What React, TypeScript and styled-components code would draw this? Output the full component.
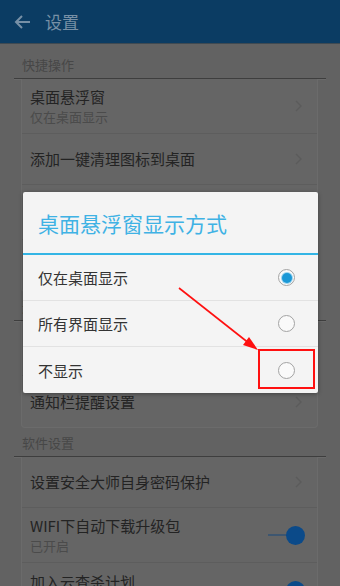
import React from 'react';
import styled, { createGlobalStyle } from 'styled-components';

const GlobalStyle = createGlobalStyle`
  html, body {
    margin: 0;
    padding: 0;
    background: #626262;
  }
  body {
    font-family: "Noto Sans CJK SC", "Noto Sans", "Liberation Sans", sans-serif;
  }
`;

const Screen = styled.div`
  position: relative;
  width: 340px;
  height: 586px;
  overflow: hidden;
  background: #626262;
`;

const Header = styled.div`
  height: 43px;
  background: #0b3c63;
  display: flex;
  align-items: center;
  padding-left: 14px;
  gap: 14px;
  box-shadow: 0 1px 0 #3f4a52;
`;

const HeaderTitle = styled.span`
  color: #7790a6;
  font-size: 17px;
  line-height: 1;
`;

const Content = styled.div`
  padding-top: 7px;
`;

const SectionTitle = styled.div`
  height: 28px;
  margin: 0 14px;
  padding-left: 8px;
  display: flex;
  align-items: center;
  font-size: 13px;
  color: #474747;
  border-bottom: 1px solid #3e3e3e;
  box-shadow: 0 1px 0 #6a6a6a;
`;

const Card = styled.div`
  margin: 0 22px 0 21px;
  background: #656565;
  border: 1px solid #6b6b6b;
  border-top: none;
  border-radius: 0 0 4px 4px;
`;

const Item = styled.div<{ $tall?: boolean }>`
  height: ${(p) => (p.$tall ? 55 : 51)}px;
  display: flex;
  align-items: center;
  padding: 0 12px 0 8px;
  border-bottom: 1px solid #5d5d5d;
  box-sizing: border-box;

  &:last-child {
    border-bottom: none;
  }
`;

const ItemText = styled.div`
  flex: 1;
  display: flex;
  flex-direction: column;
  gap: 1px;
`;

const ItemTitle = styled.span`
  font-size: 15px;
  line-height: 20px;
  color: #232323;
`;

const ItemSub = styled.span`
  font-size: 13px;
  line-height: 17px;
  color: #4b4b4b;
`;

const Chevron = () => (
  <svg width="10" height="14" viewBox="0 0 10 14" style={{ marginRight: 2 }}>
    <polyline points="3,2 8,7 3,12" fill="none" stroke="#5b5b5b" strokeWidth="1.4" />
  </svg>
);

const ToggleWrap = styled.div`
  display: flex;
  align-items: center;
  width: 37px;
`;

const ToggleTrack = styled.div`
  width: 20px;
  height: 2px;
  background: #3d5670;
`;

const ToggleThumb = styled.div`
  width: 19px;
  height: 19px;
  border-radius: 50%;
  background: #0b4a89;
  margin-left: -2px;
`;

const Toggle = () => (
  <ToggleWrap>
    <ToggleTrack />
    <ToggleThumb />
  </ToggleWrap>
);

const Dialog = styled.div`
  position: absolute;
  top: 192px;
  left: 23px;
  width: 295px;
  background: #f4f4f4;
  border-radius: 2px;
  box-shadow: 0 1px 4px rgba(0, 0, 0, 0.35);
`;

const DialogTitle = styled.div`
  height: 61px;
  display: flex;
  align-items: center;
  padding-left: 15px;
  font-size: 21px;
  color: #3fb2e4;
  border-bottom: 2px solid #33b5e5;
`;

const Option = styled.div`
  height: 46px;
  display: flex;
  align-items: center;
  justify-content: space-between;
  padding: 0 23px 0 15px;
  box-sizing: border-box;
  border-bottom: 1px solid #e2e2e2;
  font-size: 15px;
  color: #333333;

  &:last-child {
    border-bottom: none;
  }
`;

const Radio = styled.span<{ $checked?: boolean }>`
  width: 17px;
  height: 17px;
  box-sizing: border-box;
  border-radius: 50%;
  border: 1.5px solid #a3a3a3;
  background: #fafafa;
  display: flex;
  align-items: center;
  justify-content: center;

  &::after {
    content: '';
    display: ${(p) => (p.$checked ? 'block' : 'none')};
    width: 10px;
    height: 10px;
    border-radius: 50%;
    background: #1b98d6;
    box-shadow: 0 0 0 1px #9bd3ee;
  }
`;

const Highlight = styled.div`
  position: absolute;
  left: 258px;
  top: 349px;
  width: 57px;
  height: 40px;
  box-sizing: border-box;
  border: 2px solid #ff1010;
`;

const ArrowLayer = styled.svg`
  position: absolute;
  left: 0;
  top: 0;
  pointer-events: none;
`;

const options = [
  { label: '仅在桌面显示', checked: true },
  { label: '所有界面显示', checked: false },
  { label: '不显示', checked: false },
];

export default function App() {
  return (
    <>
      <GlobalStyle />
      <Screen>
        <Header>
          <svg width="17" height="16" viewBox="0 0 17 16">
            <path d="M16 8H2M8 2L2 8l6 6" fill="none" stroke="#7790a6" strokeWidth="2" />
          </svg>
          <HeaderTitle>设置</HeaderTitle>
        </Header>
        <Content>
          <SectionTitle>快捷操作</SectionTitle>
          <Card>
            <Item $tall>
              <ItemText>
                <ItemTitle>桌面悬浮窗</ItemTitle>
                <ItemSub>仅在桌面显示</ItemSub>
              </ItemText>
              <Chevron />
            </Item>
            <Item>
              <ItemText>
                <ItemTitle>添加一键清理图标到桌面</ItemTitle>
              </ItemText>
              <Chevron />
            </Item>
            <Item $tall>
              <ItemText>
                <ItemTitle>流量悬浮窗</ItemTitle>
                <ItemSub>已关闭</ItemSub>
              </ItemText>
              <Chevron />
            </Item>
            <Item>
              <ItemText>
                <ItemTitle>添加流量图标到桌面</ItemTitle>
              </ItemText>
              <Chevron />
            </Item>
          </Card>
          <SectionTitle>通知栏设置</SectionTitle>
          <Card>
            <Item $tall>
              <ItemText>
                <ItemTitle>通知栏常驻</ItemTitle>
                <ItemSub>已开启</ItemSub>
              </ItemText>
              <Toggle />
            </Item>
            <Item>
              <ItemText>
                <ItemTitle>通知栏提醒设置</ItemTitle>
              </ItemText>
              <Chevron />
            </Item>
          </Card>
          <SectionTitle>软件设置</SectionTitle>
          <Card>
            <Item>
              <ItemText>
                <ItemTitle>设置安全大师自身密码保护</ItemTitle>
              </ItemText>
              <Chevron />
            </Item>
            <Item $tall>
              <ItemText>
                <ItemTitle>WIFI下自动下载升级包</ItemTitle>
                <ItemSub>已开启</ItemSub>
              </ItemText>
              <Toggle />
            </Item>
            <Item $tall>
              <ItemText>
                <ItemTitle>加入云查杀计划</ItemTitle>
                <ItemSub>已开启</ItemSub>
              </ItemText>
              <Toggle />
            </Item>
          </Card>
        </Content>

        <Dialog>
          <DialogTitle>桌面悬浮窗显示方式</DialogTitle>
          {options.map((o) => (
            <Option key={o.label}>
              <span>{o.label}</span>
              <Radio $checked={o.checked} />
            </Option>
          ))}
        </Dialog>

        <Highlight />
        <ArrowLayer width="340" height="586" viewBox="0 0 340 586">
          <line x1="179" y1="288" x2="250" y2="344" stroke="#ff1010" strokeWidth="1.6" />
          <polygon points="258,350 243,345 249,337" fill="#ff1010" />
        </ArrowLayer>
      </Screen>
    </>
  );
}
